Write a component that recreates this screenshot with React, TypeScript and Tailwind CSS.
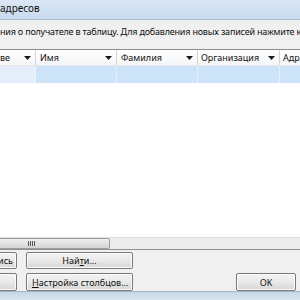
import React from "react";

const font = { fontFamily: '"Noto Sans", "Liberation Sans", sans-serif' };

function Arrow() {
  return (
    <svg width="7" height="4" viewBox="0 0 7 4" className="shrink-0">
      <path d="M0 0H7L3.5 4Z" fill="#1a1a1a" />
    </svg>
  );
}

type Col = { label: string; w: string; pl: string };

const cols: Col[] = [
  { label: "ве", w: "w-[36px]", pl: "pl-0" },
  { label: "Имя", w: "w-[81px]", pl: "pl-[4px]" },
  { label: "Фамилия", w: "w-[81px]", pl: "pl-[4px]" },
  { label: "Организация", w: "w-[82px]", pl: "pl-[3px]" },
];

function WinButton({ children, className }: { children: React.ReactNode; className?: string }) {
  return (
    <div
      className={
        "flex items-center rounded-[2px] border border-[#7a7a7a] bg-gradient-to-b from-[#f4f4f4] via-[#e9e9e9] to-[#d6d6d6] text-[9px] leading-none text-[#111] shadow-[inset_0_0_0_1px_#fbfbfb] " +
        (className ?? "")
      }
    >
      {children}
    </div>
  );
}

export default function App() {
  return (
    <div className="flex h-[300px] w-[300px] flex-col overflow-hidden bg-[#f0f0f0]" style={font}>
      {/* title bar */}
      <div className="flex h-[20px] shrink-0 items-center border-b border-[#a9bcd2] bg-gradient-to-b from-[#dbe7f4] to-[#c9dbee] pb-[3px] text-[10px] text-[#111]">
        адресов
      </div>

      {/* hint */}
      <div className="h-[29px] shrink-0 whitespace-nowrap pt-[6px] text-[9px] leading-[12px] tracking-[-0.2px] text-[#111]">
        ния о получателе в таблицу. Для добавления новых записей нажмите к
      </div>

      {/* list view */}
      <div className="flex h-[201px] shrink-0 flex-col border-y border-[#8c8f96] bg-white">
        <div className="flex h-[16px] shrink-0 border-b border-[#e3e6ea] bg-gradient-to-b from-white to-[#f4f5f7] text-[9px] text-[#111]">
          {cols.map((c) => (
            <div
              key={c.label}
              className={`flex ${c.w} shrink-0 items-center justify-between border-r border-[#d5d5d5] ${c.pl} pr-[4px]`}
            >
              <span className="whitespace-nowrap">{c.label}</span>
              <Arrow />
            </div>
          ))}
          <div className="flex flex-1 items-center whitespace-nowrap pl-[3px]">Адре</div>
        </div>
        <div className="flex h-[17px] shrink-0">
          <div className="w-[36px] shrink-0 border-r border-[#eef4fb] bg-[#e4eefa]" />
          <div className="w-[81px] shrink-0 border-r border-[#e6f0fb] bg-[#cce3f8]" />
          <div className="w-[81px] shrink-0 border-r border-[#e6f0fb] bg-[#cce3f8]" />
          <div className="w-[82px] shrink-0 border-r border-[#e6f0fb] bg-[#cce3f8]" />
          <div className="flex-1 bg-[#cce3f8]" />
        </div>
        <div className="flex-1" />
        <div className="flex h-[12px] shrink-0 border-t border-[#e2e2e2] bg-[#ececec]">
          <div className="flex w-[110px] items-center rounded-r-[2px] border border-l-0 border-[#9c9c9c] bg-gradient-to-b from-[#f0f0f0] to-[#d4d4d4] pl-[28px]">
            <div className="flex gap-[1px]">
              <div className="h-[5px] w-[1px] bg-[#555]" />
              <div className="h-[5px] w-[1px] bg-[#555]" />
              <div className="h-[5px] w-[1px] bg-[#555]" />
              <div className="h-[5px] w-[1px] bg-[#555]" />
            </div>
          </div>
        </div>
      </div>

      {/* buttons */}
      <div className="flex h-[41px] shrink-0 gap-[9px] pt-[2px]">
        <div className="flex w-[17px] shrink-0 flex-col gap-[4px] overflow-hidden">
          <WinButton className="ml-[-53px] h-[17px] w-[70px] justify-end pr-[3px]">Новая запись</WinButton>
          <WinButton className="ml-[-53px] h-[18px] w-[70px] justify-end pr-[3px]">Удалить запись</WinButton>
        </div>
        <div className="flex w-[107px] shrink-0 flex-col gap-[4px]">
          <WinButton className="h-[17px] justify-center">
            Най<u>т</u>и...
          </WinButton>
          <WinButton className="h-[18px] justify-start pl-[5px]">
            <u>Н</u>астройка столбцов...
          </WinButton>
        </div>
        <div className="flex-1" />
        <div className="mr-[4px] flex w-[60px] shrink-0 flex-col justify-end">
          <WinButton className="h-[18px] justify-center">OK</WinButton>
        </div>
      </div>

      {/* window frame bottom */}
      <div className="flex-1 border-t border-[#a7b6c8] bg-gradient-to-b from-[#c6d5e6] to-[#d9e5f1]" />
    </div>
  );
}
